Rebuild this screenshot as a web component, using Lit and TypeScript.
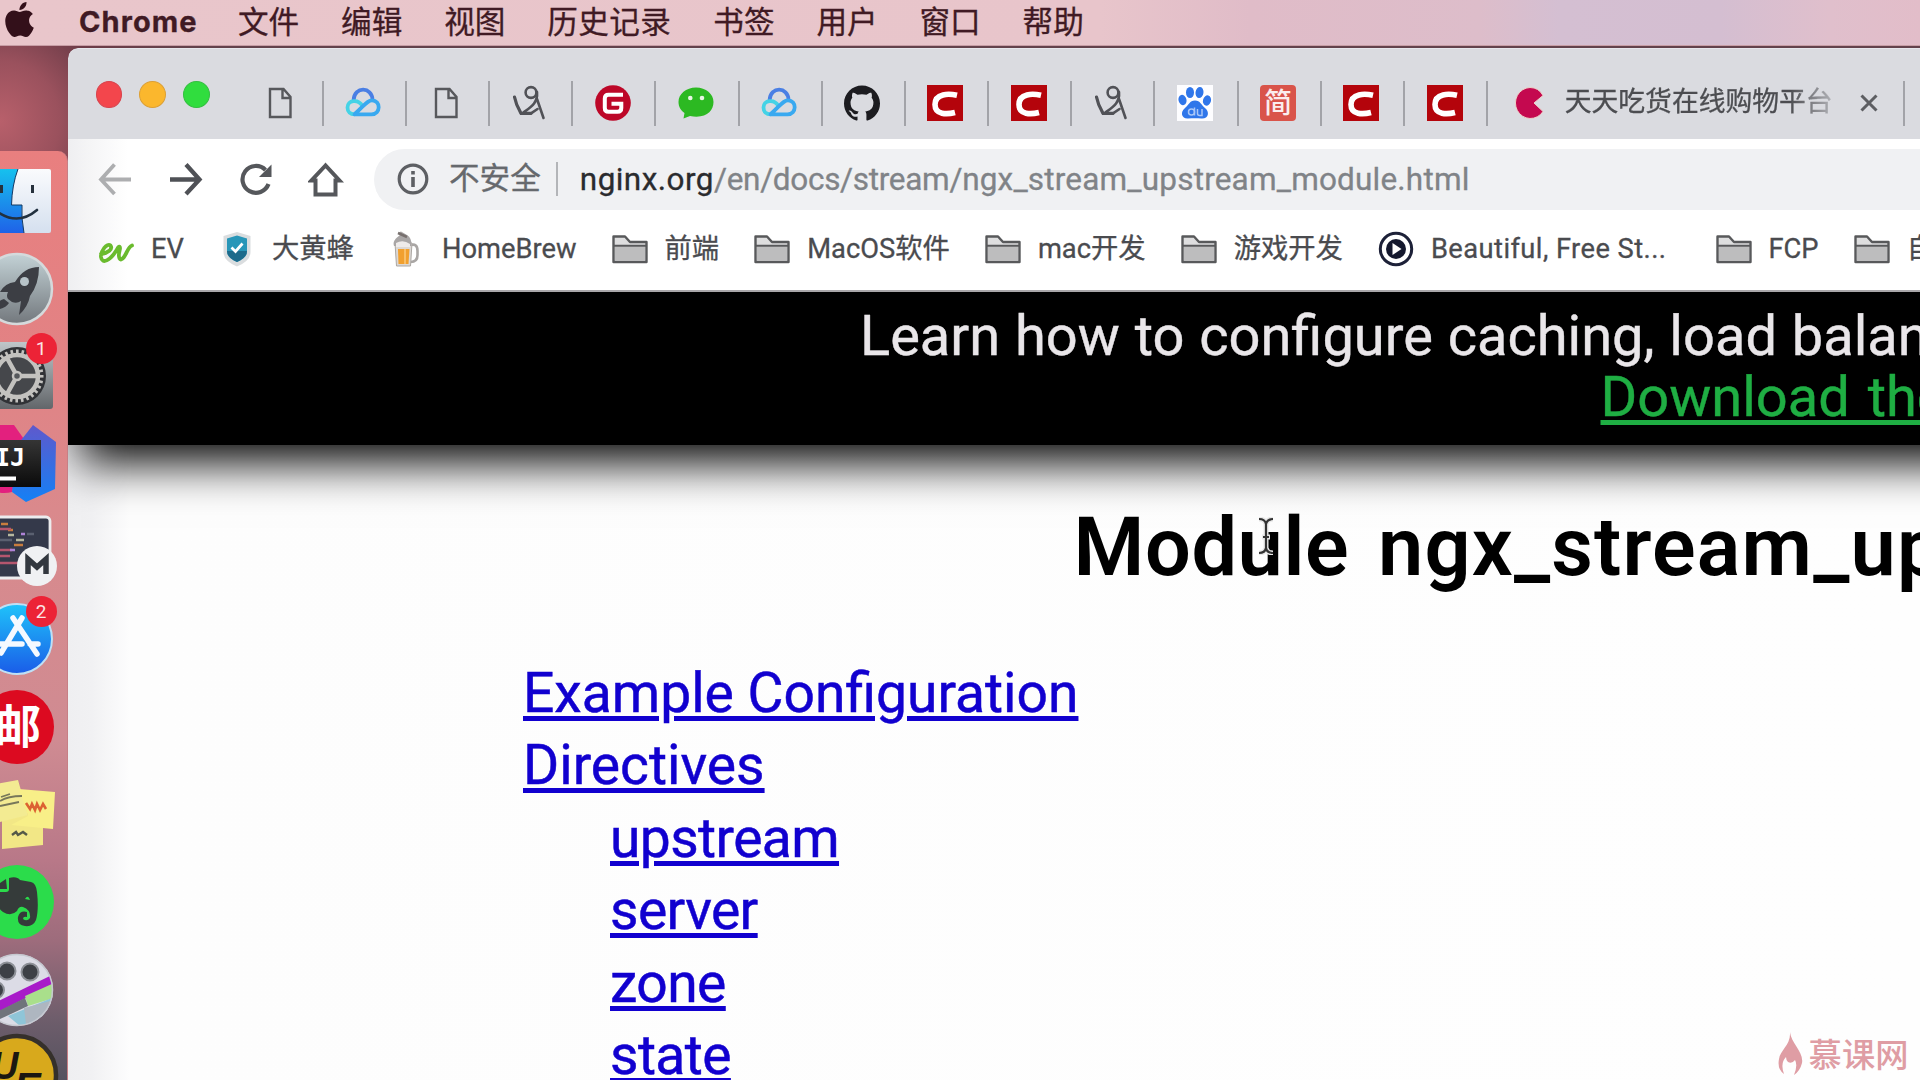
import { LitElement, html, svg, css, nothing } from "lit";
import { customElement } from "lit/decorators.js";

type Glyph = ReturnType<typeof svg>;

const apple = svg`<path d="M12.152 6.896c-.948 0-2.415-1.078-3.96-1.04-2.04.027-3.91 1.183-4.961 3.014-2.117 3.675-.546 9.103 1.519 12.09 1.013 1.454 2.208 3.09 3.792 3.039 1.52-.065 2.09-.987 3.935-.987 1.831 0 2.35.987 3.96.948 1.637-.026 2.676-1.48 3.676-2.948 1.156-1.688 1.636-3.325 1.662-3.415-.039-.013-3.182-1.221-3.22-4.857-.026-3.04 2.48-4.494 2.597-4.559-1.429-2.09-3.623-2.324-4.39-2.376-2-.156-3.675 1.09-4.61 1.09zM15.53 3.83c.843-1.012 1.4-2.427 1.245-3.83-1.207.052-2.662.805-3.532 1.818-.78.896-1.454 2.338-1.273 3.714 1.338.104 2.715-.688 3.559-1.701"/>`;

/* Favicons, drawn on a 36 x 36 grid */
const fav: Record<string, Glyph> = {
  doc: svg`<path d="M8 4h13.5l7 8v20H8z M20.5 4v9h8" fill="none" stroke="#57585c" stroke-width="2.400"/>`,
  cloud: svg`<g fill="none" stroke-width="3.800" stroke-linecap="round"><path d="M8.600 15C9.500 1 27 1.500 27.600 15" stroke="#4a7fe4"/><path d="M17.500 21C13 13.500 2.500 15 2.500 22.500C2.500 27 5.500 29.300 9.500 29.300" stroke="#45d3e6"/><path d="M9.500 29.300H26.500C36 29.300 36 15.300 27 15.300C22 15.300 19.500 20.500 10 28.800" stroke="#39a9f0"/></g>`,
  figure: svg`<g fill="none" stroke="#515257" stroke-linecap="round"><circle cx="19" cy="7.500" r="5.400" stroke-width="2.600"/><path d="M25 7C26 18 19 22 11.500 27.500" stroke-width="2.600"/><path d="M2.500 12C4 20 6.500 24 9 28.300H19" stroke-width="3.200"/><path d="M25 14L31.500 33M19 28.300L25.500 24" stroke-width="2.600"/></g>`,
  g: svg`<circle cx="18" cy="18" r="17.800" fill="#bd0728"/><path d="M28 9.700H13.500Q9.800 9.700 9.800 13.500V23Q9.800 26.800 13.500 26.800H22.500Q26.300 26.800 26.300 23V18.700H16.500" fill="none" stroke="#fff" stroke-width="4"/>`,
  wechat: svg`<path d="M18 2.500C8 2.500.500 9 .500 17C.500 22 3 25.500 6.500 28L5.500 33.500L12 31C28 34 35.500 26 35.500 17C35.500 9 28 2.500 18 2.500Z" fill="#2cb922"/><circle cx="12.300" cy="13" r="2.300" fill="#e8f5e4"/><circle cx="24" cy="13" r="2.300" fill="#e8f5e4"/>`,
  github: svg`<path transform="scale(1.5)" fill="#1c1c20" d="M12 .297c-6.630 0-12 5.373-12 12 0 5.303 3.438 9.800 8.205 11.385.600.113.820-.258.820-.577 0-.285-.010-1.040-.015-2.040-3.338.724-4.042-1.610-4.042-1.610C4.422 18.070 3.633 17.700 3.633 17.700c-1.087-.744.084-.729.084-.729 1.205.084 1.838 1.236 1.838 1.236 1.070 1.835 2.809 1.305 3.495.998.108-.776.417-1.305.760-1.605-2.665-.300-5.466-1.332-5.466-5.930 0-1.310.465-2.380 1.235-3.220-.135-.303-.540-1.523.105-3.176 0 0 1.005-.322 3.300 1.230.960-.267 1.980-.399 3-.405 1.020.006 2.040.138 3 .405 2.280-1.552 3.285-1.230 3.285-1.230.645 1.653.240 2.873.120 3.176.765.840 1.230 1.910 1.230 3.220 0 4.610-2.805 5.625-5.475 5.920.420.360.810 1.096.810 2.220 0 1.606-.015 2.896-.015 3.286 0 .315.210.690.825.570C20.565 22.092 24 17.592 24 12.297c0-6.627-5.373-12-12-12"/>`,
  c: svg`<path d="M0 0h36v36H0z" fill="#b4040b"/><path d="M30 10.300C22 8.500 8 8 8 19.500C8 30 20 29.500 28 27.500" fill="none" stroke="#fff" stroke-width="5.600"/>`,
  paw: svg`<path d="M0 0h36v36H0z" fill="#fdfdff"/><g fill="#2f76ea"><ellipse cx="5.500" cy="15" rx="4" ry="5.200" transform="rotate(-15 5.500 15)"/><ellipse cx="13" cy="7.500" rx="4" ry="5.500"/><ellipse cx="22.500" cy="7.500" rx="4" ry="5.500" transform="rotate(8 22.500 7.500)"/><ellipse cx="30" cy="15.500" rx="4" ry="5.200" transform="rotate(15 30 15.500)"/><path d="M18 15.500C12.500 15.500 12 20 8 23C2.500 27.500 5 34 11 33.500C16 33 20 33 24.500 33.500C31.500 34 33 27 28 23C24 20 23.500 15.500 18 15.500Z"/></g><g fill="none" stroke="#a9c6f7" stroke-width="1.500"><circle cx="14.500" cy="27" r="3"/><path d="M17.500 22.500v8M20.500 24v4.500q0 2 2.200 2h2.300V24"/></g>`,
  jian: svg`<rect width="36" height="36" rx="4" fill="#d9544a"/><text class="cjk" x="18" y="28" font-size="28" text-anchor="middle" fill="#fbeeee">简</text>`,
  pac: svg`<path d="M17 2.500A15 15.500 0 1 0 30 26.500L21 18L30 10.500A15 15.500 0 0 0 17 2.500Z" fill="#c4094f" stroke="#ecd2c8" stroke-width="1"/>`,
};

/* Bookmark icons, drawn on a 36 x 36 grid */
const folder = svg`<path d="M1.500 31V5.500H13L18 11H34.500V31Z" fill="#dededf" stroke="#58595b" stroke-width="2.400" stroke-linejoin="round"/><path d="M3 15.500H33V30H3Z" fill="#bdbdbe"/><path d="M2 14.800H34" stroke="#58595b" stroke-width="2"/>`;
const marks: Record<string, Glyph> = {
  folder,
  ev: svg`<path d="M3 23C10 22 15 18 12.500 14.500C9 11.500 2.500 20 3 26C4 33.500 12 30 19 18.500C21 14 23 15 21.500 20C20 26 21.500 32 26 26C29 22 30 16 34 14.500" fill="none" stroke="#6abb2e" stroke-width="3.800" stroke-linecap="round" stroke-linejoin="round"/>`,
  shield: svg`<path d="M18 1L31.500 5V21Q31.500 30 18 35.500Q4.500 30 4.500 21V5Z" fill="#dadddf"/><path d="M18 4.500L28 7.500V20Q28 27 18 31Q8 27 8 20V7.500Z" fill="#2896b8"/><path d="M8 20Q8 27 18 31Q28 27 28 20Z" fill="#1d6b8b"/><path d="M12.500 16.500L16.500 20.500L23.500 12.500" fill="none" stroke="#fff" stroke-width="2.700"/>`,
  beer: svg`<path d="M21.500 14Q28.500 12 28.500 20V24Q28.500 31 21.500 31" fill="none" stroke="#a9a6a4" stroke-width="2.600"/><path d="M6 12H23L21.500 35H7.500Z" fill="#dcd8d5" stroke="#aba7a3"/><path d="M9 18H20.500L19.500 33H9.500Z" fill="#f1a02f"/><path d="M15 18H17V33H15Z" fill="#f9bf68"/><path d="M5 15C3 9 9 6 11 4Q9 1 12 .500L18 4Q23 7 22.500 15Z" fill="#a9a6a6"/><path d="M7 12Q14 8 21 13V16H7Z" fill="#eeebea"/><path d="M9 2L18 6" stroke="#77706e" stroke-width="2.500"/>`,
  play: svg`<circle cx="18" cy="18" r="15.700" fill="#fff" stroke="#1d2138" stroke-width="3"/><circle cx="18" cy="18" r="10" fill="#14182e"/><path d="M14.500 12L23.500 18L14.500 24Z" fill="#fff"/>`,
};

const tabs = ["doc", "cloud", "doc", "figure", "g", "wechat", "cloud", "github", "c", "c", "figure", "paw", "jian", "c", "c"];

const bookmarks: [string, string][] = [
  ["ev", "EV"], ["shield", "大黄蜂"], ["beer", "HomeBrew"], ["folder", "前端"], ["folder", "MacOS软件"], ["folder", "mac开发"],
  ["folder", "游戏开发"], ["play", "Beautiful, Free St..."], ["folder", "FCP"], ["folder", "自"],
];

/* Dock icons, drawn on a 67 x 88 grid whose icons are centred on (17, 44) */
const teeth = Array.from({ length: 28 }, (_, i) => svg`<path d="M16 17.500h2.600v6h-2.600z" transform="rotate(${(i * 360) / 28} 17 44)"/>`);
const dockIcons: { art: Glyph; badge?: string }[] = [
  { art: svg`<defs><linearGradient id="fb" x2="0" y2="1"><stop stop-color="#16c1ee"/><stop offset="1" stop-color="#1f62e8"/></linearGradient><linearGradient id="fw" x2="0" y2="1"><stop stop-color="#fafbfd"/><stop offset="1" stop-color="#d5e0ef"/></linearGradient></defs>
    <rect x="-19" y="12" width="70" height="64" rx="2" fill="url(#fw)"/><path d="M-19 12H18Q12 28 11.500 48H22Q21 60 24 76H-19Z" fill="url(#fb)"/><path d="M18 12Q12 28 11.500 48H22Q21 60 24 76" fill="none" stroke="#153a63" stroke-width="1"/><path d="M-5 53Q17 70 37 53" fill="none" stroke="#22303f" stroke-width="2.600" stroke-linecap="round"/><path d="M31 28h3v8h-3zM0 28h3v8h-3z" fill="#26313c"/>` },
  { art: svg`<defs><linearGradient id="lp" x2="0" y2="1"><stop stop-color="#c3d2d6"/><stop offset="1" stop-color="#73787d"/></linearGradient></defs><circle cx="17" cy="44" r="35" fill="url(#lp)" stroke="#d5dadc" stroke-width="2.500"/><path d="M39 22Q24 22 15 37Q5 38 0 47L8 47Q6 51 8 54L12 57Q17 59 21 56L19 70Q28 62 30 51Q39 39 39 22Z" fill="#3c3e44"/><circle cx="24.500" cy="36.500" r="4.500" fill="#b7c3c8"/><path d="M4 54Q-4 56 -5 65Q5 64 9 58Z" fill="#3c3e44"/>` },
  { art: svg`<defs><linearGradient id="st" x2="0" y2="1"><stop stop-color="#bfc6c9"/><stop offset="1" stop-color="#62666a"/></linearGradient></defs><rect x="-20" y="10" width="73" height="67" rx="3" fill="url(#st)"/><circle cx="17" cy="44" r="29" fill="#303236"/><g fill="#c3c2bf">${teeth}</g><circle cx="17" cy="44" r="21" fill="#45474b" stroke="#c3c2bf" stroke-width="4.500"/><path d="M17 44L7 26M17 44H38M17 44L7 62" stroke="#c3c2bf" stroke-width="4.500"/><circle cx="17" cy="44" r="4" fill="#55575b" stroke="#c3c2bf" stroke-width="2.500"/>`, badge: "1" },
  { art: svg`<defs><linearGradient id="ij" x2="0" y2="1"><stop stop-color="#5f59cc"/><stop offset="1" stop-color="#1480f5"/></linearGradient><linearGradient id="ik" x2="0" y2="1"><stop stop-color="#353535"/><stop offset="1" stop-color="#0a0a0a"/></linearGradient></defs><path d="M-20 5H14L26 22L12 72Q0 75 -20 68Z" fill="#e3207e"/><path d="M33 5L56 22L55 69L26 82L12 72L18 24Z" fill="url(#ij)"/><path d="M-20 20H41V67H-20Z" fill="url(#ik)"/><text x="-5" y="46" class="logo" font-size="25" fill="#fff">IJ</text><path d="M0 56.500H16V60.500H0Z" fill="#fff"/>` },
  { art: svg`<rect x="-20" y="9" width="70" height="61" rx="4" fill="#34394a" stroke="#ececee" stroke-width="2.800"/><g stroke-width="2.600"><path d="M1 16H8M14 37H23M8 22H13" stroke="#c87d3e"/><path d="M-2 21H11M-2 42H12M-2 55H18M-2 48H10" stroke="#b5566e"/><path d="M16 32H24M8 27H14" stroke="#b5b8a0"/><path d="M21 26H25M10 42H15" stroke="#ae83d6"/><path d="M27 26H34M0 32H12" stroke="#5a6070"/></g><circle cx="37" cy="58" r="20" fill="#f0f1f3"/><path d="M28 66V51L37 59L46 51V66" fill="none" stroke="#33383f" stroke-width="5.500"/>` },
  { art: svg`<defs><linearGradient id="as" x2="0" y2="1"><stop stop-color="#1fc3fa"/><stop offset="1" stop-color="#1a5ce8"/></linearGradient></defs><circle cx="17" cy="44" r="35" fill="url(#as)" stroke="#bfe0f5" stroke-width="2"/><g stroke="#f4f9ff" stroke-width="5.500" stroke-linecap="round"><path d="M22 23L1 58M13 23L37 59M-3 49H22M30 49H38"/></g>`, badge: "2" },
  { art: svg`<circle cx="17" cy="44" r="37" fill="#dc0a20"/><text class="cjk heavy" x="18" y="60" font-size="46" text-anchor="middle" fill="#fff">邮</text>` },
  { art: svg`<path d="M2 40L43 48V75L2 79Z" fill="#f2e786"/><path d="M-4 14L18 10L28 45L-4 53Z" fill="#f3eb92"/><path d="M19 19L55 22L53 59L11 55L28 46Z" fill="#f8ef88"/><path d="M0 31Q8 26 22 26M0 36L19 32M1 27L10 24" stroke="#77775a" stroke-width="1.800" fill="none"/><path d="M26 33L30 39L32 34L35 40L37 34L40 40L43 34L46 39" stroke="#dc6232" stroke-width="2.600" fill="none"/><path d="M12 65L16 62L18 65L23 62L27 65" stroke="#555948" stroke-width="2.400" fill="none"/>` },
  { art: svg`<circle cx="17" cy="44" r="37" fill="#2bdc4b"/><path d="M6 21L7 31H-4Q-6 31 0 25Z" fill="#353b3a"/><path d="M9 20Q17 18 20 22L31 24Q36 25 37 34Q39 52 36 62Q33 69 25 68Q17 67 18 59Q20 52 27 54L27 59Q23 58 23 61Q27 64 30 60Q31 52 23 49Q19 48 17 53Q11 59 3 54Q-3 51 -5 34H6Q9 34 9 31Z" fill="#353b3a"/><path d="M25 41Q28 36 30 42Z" fill="#2bdc4b"/>` },
  { art: svg`<defs><clipPath id="rc"><circle cx="17" cy="44" r="36"/></clipPath></defs><g clip-path="url(#rc)"><rect x="-20" y="7" width="74" height="74" fill="#dcdce6"/><g fill="#3d4046" stroke="#8d9097" stroke-width="2"><circle cx="7" cy="25" r="8.500"/><circle cx="30" cy="26" r="8.500"/><circle cx="-4" cy="44" r="8"/></g><path d="M-20 64L54 28V38L-20 75Z" fill="#a81bc9"/><path d="M25 50L54 37V52L28 60Z" fill="#a9df8b"/><path d="M-10 69L25 52L28 60L-2 74Z" fill="#70747b"/><path d="M8 70L54 51V68L20 80Z" fill="#8fc5d8"/><path d="M24 62L54 54V66L26 78Z" fill="#aeb6c0"/></g><circle cx="17" cy="44" r="35.500" fill="none" stroke="#c6c8d0" stroke-width="1.500"/>` },
  { art: svg`<circle cx="17" cy="42" r="39" fill="#d8a91c" stroke="#35302b" stroke-width="4.500"/><text class="logo slant" x="-9" y="46" font-size="38" fill="#1b1711">U</text><text class="logo slant" x="14" y="68" font-size="40" fill="#1b1711">E</text>` },
];

const cjkFont = css`"Noto Sans CJK SC"`;

@customElement("mac-dock")
class MacDock extends LitElement {
  static styles = css`
    :host { display: block; width: 68px; flex: none; padding-top: 105px; box-sizing: border-box; overflow: hidden; }
    .dock { border-radius: 0 10px 0 0; padding-top: 6px; height: 1000px; box-sizing: border-box; border-right: 1px solid #c77f85;
      background: linear-gradient(#e97f7f 0, #e28284 200px, #d98a8d 380px, #cf8b92 590px, #b87888 710px, #9d6c7c 790px, #6d5d6b 870px, #55525f 930px); }
    .slot { position: relative; height: 87.650px; }
    svg { display: block; width: 67px; height: 88px; overflow: hidden; }
    .badge { position: absolute; left: 25.500px; top: 1px; width: 31px; height: 31px; border-radius: 50%; background: #ec2336; color: #fbe3e5;
      font: 19px/31px Roboto, sans-serif; text-align: center; }
    .cjk { font-family: ${cjkFont}, sans-serif; }
    .heavy { font-weight: 700; }
    .logo { font-family: "DejaVu Sans Mono", monospace; font-weight: 700; }
    .slant { font-family: "Liberation Sans", sans-serif; font-style: italic; }
  `;
  render() {
    return html`<div class="dock">${dockIcons.map((d) => html`<div class="slot"><svg viewBox="0 0 67 88">${d.art}</svg>${d.badge ? html`<span class="badge">${d.badge}</span>` : nothing}</div>`)}</div>`;
  }
}

@customElement("browser-chrome")
class BrowserChrome extends LitElement {
  static styles = css`
    :host { display: block; font-family: Roboto, ${cjkFont}, sans-serif; white-space: nowrap; }
    svg { display: block; flex: none; width: 36px; height: 36px; }
    .cjk { font-family: ${cjkFont}, sans-serif; font-weight: 500; }
    .tabs { display: flex; height: 91px; background: #dadbe0; border-top: 1px solid #e6e7ec; box-sizing: border-box; border-radius: 10px 0 0 0; }
    .lights { display: flex; gap: 17px; padding: 32px 0 0 27.500px; width: 172.400px; box-sizing: border-box; flex: none; }
    .lights i { width: 26.700px; height: 27px; border-radius: 50%; box-sizing: border-box; }
    .red { background: #f3464c; border: 1px solid #d8434c; }
    .amber { background: #fbb72d; border: 1px solid #dca037; }
    .green { background: #30dd3e; border: 1px solid #35bf42; }
    .tab { display: flex; align-items: center; justify-content: center; width: 83.200px; height: 45px; margin-top: 31.500px; padding-right: 2px; box-sizing: border-box; border-right: 2px solid #a2a3a8; flex: none; }
    .wide { width: 416.500px; justify-content: flex-start; padding: 0 0 0 24.500px; }
    .title { font-size: 26.800px; line-height: 34px; margin: 0 0 2px 16px; width: 285px; color: #4c4d51;
      -webkit-mask-image: linear-gradient(90deg, #000 225px, rgba(0,0,0,.25) 270px); -webkit-text-stroke: .3px; }
    .close { width: 20px; height: 20px; margin-left: 9px; }
    .bar { display: flex; align-items: center; height: 80px; padding-left: 12.500px; box-sizing: border-box; }
    .nav { width: 70px; display: flex; justify-content: center; flex: none; }
    .pill { display: flex; align-items: center; flex: 1; height: 61px; margin-left: 13px; border-radius: 31px 0 0 31px; background: #f0f1f3; font-size: 31.500px; color: #808387; padding-left: 21.500px; box-sizing: border-box; overflow: hidden; -webkit-text-stroke: .3px; }
    .insecure { font-size: 30.600px; color: #66696d; margin: 0 15px 0 18px; line-height: 40px; }
    .rule { width: 2px; height: 34px; background: #b3b5b8; margin-right: 22px; flex: none; }
    .host { color: #2a2b2e; letter-spacing: .450px; }
    .dir { letter-spacing: -.300px; }
    .file { letter-spacing: .190px; }
    .marks { display: flex; align-items: center; gap: 35.100px; height: 71px; padding: 0 0 12px 30px; box-sizing: border-box; overflow: hidden; font-size: 27.300px; line-height: 36px; color: #4a4b4f; -webkit-text-stroke: .3px; }
    .mark { display: flex; align-items: center; gap: 17px; flex: none; }
    .play { margin-right: 14px; letter-spacing: .430px; }
    .page { background: linear-gradient(90deg, #efeff1, #fff 60px); border-bottom: 2px solid #a9a7aa; }
  `;
  render() {
    return html`
      <div class="tabs">
        <div class="lights"><i class="red"></i><i class="amber"></i><i class="green"></i></div>
        ${tabs.map((t) => html`<div class="tab"><svg viewBox="0 0 36 36">${fav[t]}</svg></div>`)}
        <div class="tab wide"><svg viewBox="0 0 36 36">${fav.pac}</svg><span class="title">天天吃货在线购物平台</span>
          <svg class="close" viewBox="0 0 20 20"><path d="M2.500 2.500L17.500 17.500M17.500 2.500L2.500 17.500" stroke="#5d5e62" stroke-width="3"/></svg></div>
      </div>
      <div class="page">
        <div class="bar">
          <span class="nav"><svg viewBox="0 0 36 36"><path d="M33 18.500H4M16.500 3.500L3 18.500L16.500 33" fill="none" stroke="#adaeb0" stroke-width="3.800"/></svg></span>
          <span class="nav"><svg viewBox="0 0 36 36"><path d="M2 18.500H32M18 3.500L31.500 18.500L18 33" fill="none" stroke="#4f5156" stroke-width="4.300"/></svg></span>
          <span class="nav"><svg viewBox="0 0 36 36"><path d="M30.500 23A13.400 13.400 0 1 1 27.500 9" fill="none" stroke="#55575b" stroke-width="4.200"/><path d="M33.500 3.500V16H21Z" fill="#55575b"/></svg></span>
          <span class="nav"><svg viewBox="0 0 36 36"><path d="M17.500 4.500L3.500 19.500H7.500V33.500H27.500V19.500H31.500Z" fill="none" stroke="#55575b" stroke-width="4"/></svg></span>
          <div class="pill">
            <svg viewBox="0 0 36 36"><circle cx="18" cy="18" r="13.800" fill="none" stroke="#5d5f63" stroke-width="3.200"/><path d="M16.200 16h3.600v10h-3.600zM16.200 10h3.600v3.500h-3.600z" fill="#5d5f63"/></svg>
            <span class="insecure">不安全</span><i class="rule"></i><span class="host">nginx.org</span><span class="dir">/en/docs/stream/</span><span class="file">ngx_stream_upstream_module.html</span>
          </div>
        </div>
        <div class="marks">${bookmarks.map(([k, t]) => html`<span class="mark ${k}"><svg viewBox="0 0 36 36">${marks[k]}</svg><span>${t}</span></span>`)}</div>
      </div>`;
  }
}

@customElement("docs-page")
class DocsPage extends LitElement {
  static styles = css`
    :host { display: block; flex: 1; overflow: hidden; background: linear-gradient(90deg, #efeff1 0, #f1f1f3 24px, #fdfdfd 62px, #fefefe); font-family: Roboto, sans-serif; white-space: nowrap; color: #000; }
    .banner { background: #000; height: 153px; margin-right: -120px; padding-top: 14px; box-sizing: border-box; font-size: 56px; line-height: 61px; color: #e9e6e9; box-shadow: 13px 17px 44px 0 #000; -webkit-text-stroke: .4px; }
    .lead { padding-left: 792px; word-spacing: .900px; }
    .get { padding-left: 1532.500px; word-spacing: 4px; color: #1fae43; text-decoration: underline; text-decoration-thickness: 5px; text-underline-offset: 4px; display: block; }
    h1 { margin: 54.500px 0 0 1005.500px; font-size: 81px; line-height: 96px; font-weight: 600; letter-spacing: .600px; }
    h1 span { margin-left: 8px; letter-spacing: 1.200px; }
    nav { display: flex; flex-direction: column; align-items: flex-start; margin: 61.500px 0 0 455px; font-size: 55.200px; line-height: 72.400px; -webkit-text-stroke: .5px; }
    nav a { color: #1100cf; text-decoration: underline; text-decoration-thickness: 5px; text-underline-offset: 4px; }
    nav .sub { margin-left: 87px; letter-spacing: -.600px; }
  `;
  render() {
    return html`
      <div class="banner"><div class="lead">Learn how to configure caching, load balancing</div><a class="get">Download the</a></div>
      <h1>Module <span>ngx_stream_upstream_module</span></h1>
      <nav><a>Example Configuration</a><a>Directives</a>${["upstream", "server", "zone", "state"].map((s) => html`<a class="sub">${s}</a>`)}</nav>`;
  }
}

@customElement("app-root")
class AppRoot extends LitElement {
  static styles = css`
    :host { display: flex; flex-direction: column; position: relative; width: 1920px; height: 1080px; overflow: hidden; background: #96505c; }
    .menu { display: flex; align-items: center; height: 46px; flex: none; box-sizing: border-box; border-bottom: 1px solid #c79da5; color: #401a24; font: 30.600px/40px Roboto, ${cjkFont}, sans-serif; white-space: nowrap; -webkit-text-stroke: .3px;
      background: linear-gradient(90deg, #e9c6cb 0, #e8c5cb 1100px, #e0bcc8 1250px, #ddbdca 1480px, #d4bfd2 1560px, #d4bed1 1720px, #e0bfcc 1830px, #e2bdc9); }
    .menu svg { width: 35px; height: 35px; margin: -6px 0 0 2px; fill: #33101a; }
    .app { font: 700 29px/40px Inter, sans-serif; letter-spacing: 1.100px; margin: -1px 41px 0 42px; width: 118px; }
    .items { display: flex; gap: 41.900px; }
    .items :nth-child(4) { letter-spacing: .450px; }
    .body { display: flex; flex: 1; min-height: 0; background: radial-gradient(circle at 0 75px, #b8606b 0, #9a515d 60px, #6d3c48 110px, #63424c 200px); }
    .window { display: flex; flex-direction: column; flex: 1; min-width: 0; margin-top: 2px; border-radius: 10px 0 0 0; overflow: hidden; }
    .cursor { position: absolute; left: 1256px; top: 517px; width: 20px; height: 38px; }
    .brand { position: absolute; right: 11.500px; bottom: 4px; display: flex; align-items: center; gap: 6px; color: #df9da4; font: 500 33.300px/46px ${cjkFont}, sans-serif; }
    .brand svg { width: 25px; height: 43px; }
  `;
  render() {
    return html`
      <div class="menu">
        <svg viewBox="0 0 24 24">${apple}</svg><span class="app">Chrome</span>
        <div class="items">${["文件", "编辑", "视图", "历史记录", "书签", "用户", "窗口", "帮助"].map((m) => html`<span>${m}</span>`)}</div>
      </div>
      <div class="body"><mac-dock></mac-dock><div class="window"><browser-chrome></browser-chrome><docs-page></docs-page></div></div>
      <svg class="cursor" viewBox="0 0 20 38"><path d="M3 2Q9 2 10 7Q11 2 17 2M10 6V32M3 36Q9 36 10 31Q11 36 17 36M6 20H14" fill="none" stroke="#e8e8e8" stroke-width="5"/><path d="M3 2Q9 2 10 7Q11 2 17 2M10 6V32M3 36Q9 36 10 31Q11 36 17 36M7 20H13" fill="none" stroke="#333" stroke-width="2.200"/></svg>
      <div class="brand"><svg viewBox="0 0 25 43"><path d="M12 0C13 11 26 20 24 31Q22 39 16 43Q20 33 17 28Q14 32 10 30Q8 28 8 25Q2 31 6 42Q-1 37 1 27C2 18 13 13 12 0Z" fill="#df9da4"/></svg>慕课网</div>`;
  }
}
